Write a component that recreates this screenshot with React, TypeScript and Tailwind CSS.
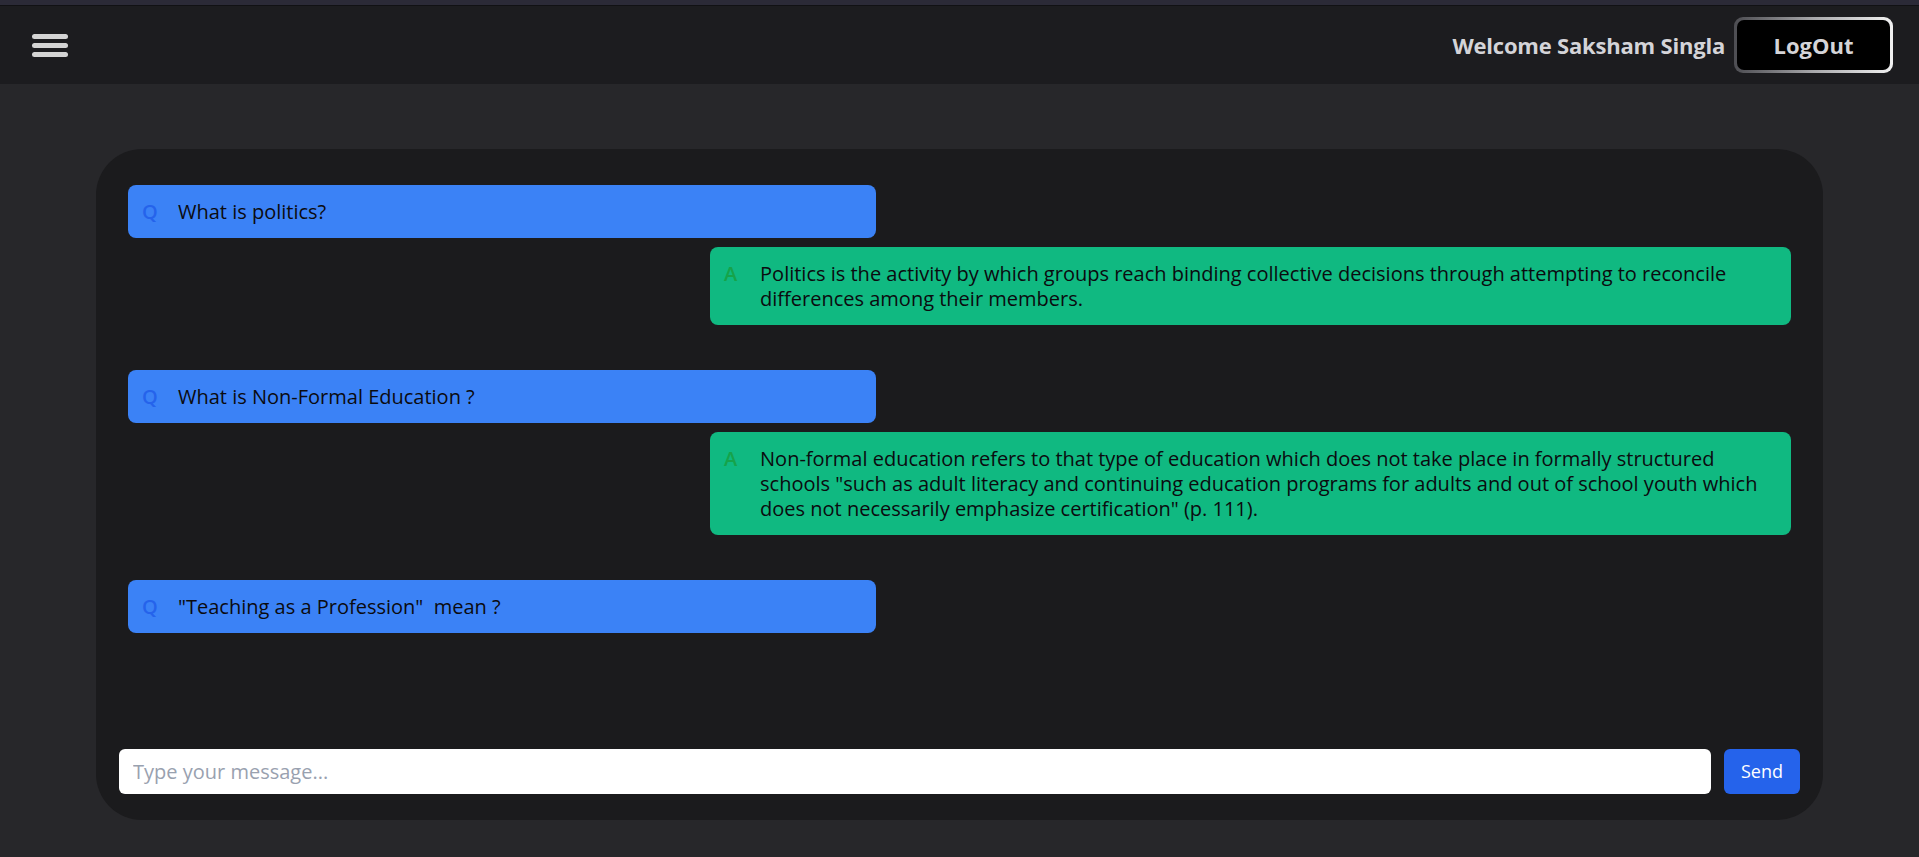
import { useState } from "react";

const chats = [
  {
    q: "What is politics?",
    a: "Politics is the activity by which groups reach binding collective decisions through attempting to reconcile differences among their members.",
  },
  {
    q: "What is Non-Formal Education ?",
    a: 'Non-formal education refers to that type of education which does not take place in formally structured schools "such as adult literacy and continuing education programs for adults and out of school youth which does not necessarily emphasize certification" (p. 111).',
  },
  {
    q: '"Teaching as a Profession"\u00a0 mean ?',
    a: "",
  },
];

function Header() {
  return (
    <>
      <div className="h-[5px] bg-[#2b2a37]" />
      <div className="h-px bg-[#111114]" />
      <header className="h-[78px] bg-[#1c1c1f] flex items-center justify-between pl-8 pr-[26px]">
        <button className="flex flex-col gap-1 w-9">
          <span className="h-[5px] w-9 rounded-full bg-[#d4d4d4]" />
          <span className="h-[5px] w-9 rounded-full bg-[#d4d4d4]" />
          <span className="h-[5px] w-9 rounded-full bg-[#d4d4d4]" />
        </button>
        <div className="flex items-center gap-[9px]">
          <span className="text-[22px] font-bold text-[#d4d4d8] tracking-[-0.2px]">Welcome Saksham Singla</span>
          <div className="w-[159px] h-[56px] rounded-[9px] p-[3px] bg-gradient-to-r from-[#4d4d52] via-[#a8a8ab] to-[#f2f2f2]">
            <button className="w-full h-full rounded-[7px] bg-black text-[22px] font-bold text-[#d4d4d8]">
              LogOut
            </button>
          </div>
        </div>
      </header>
    </>
  );
}

export default function App() {
  const [msg, setMsg] = useState("");

  return (
    <div className="min-h-[857px] bg-[#27272a]" style={{ fontFamily: '"Open Sans", "Noto Sans", sans-serif' }}>
      <Header />
      <main className="px-24 pt-[65px] pb-[37px]">
        <div className="h-[671px] rounded-[46px] bg-[#1b1b1d] flex flex-col">
          <div className="flex-1 px-8 pt-9 flex flex-col gap-[45px]">
            {chats.map((c, i) => (
              <div key={i} className="flex flex-col gap-[9px]">
                <div className="w-[45%] bg-[#3b82f6] rounded-lg py-[14px] px-3.5 flex text-[20px] leading-[25px] text-[#0b0b0f] font-medium">
                  <span className="w-9 shrink-0 font-semibold text-[#2563eb]">Q</span>
                  <span className="whitespace-pre">{c.q}</span>
                </div>
                {c.a && (
                  <div className="self-end w-[65%] bg-[#10b981] rounded-lg py-[14px] px-3.5 flex text-[20px] leading-[25px] text-[#0b0b0f] font-medium">
                    <span className="w-9 shrink-0 font-semibold text-[#16a34a]">A</span>
                    <span>{c.a}</span>
                  </div>
                )}
              </div>
            ))}
          </div>
          <div className="px-[23px] pb-[26px] flex gap-[13px]">
            <input
              value={msg}
              onChange={(e) => setMsg(e.target.value)}
              placeholder="Type your message..."
              className="flex-1 h-[45px] rounded-md bg-white pl-[14px] text-[20px] text-gray-900 placeholder:text-gray-400 outline-none"
            />
            <button className="w-[76px] h-[45px] rounded-md bg-[#2563eb] text-white text-[18px]">Send</button>
          </div>
        </div>
      </main>
    </div>
  );
}
